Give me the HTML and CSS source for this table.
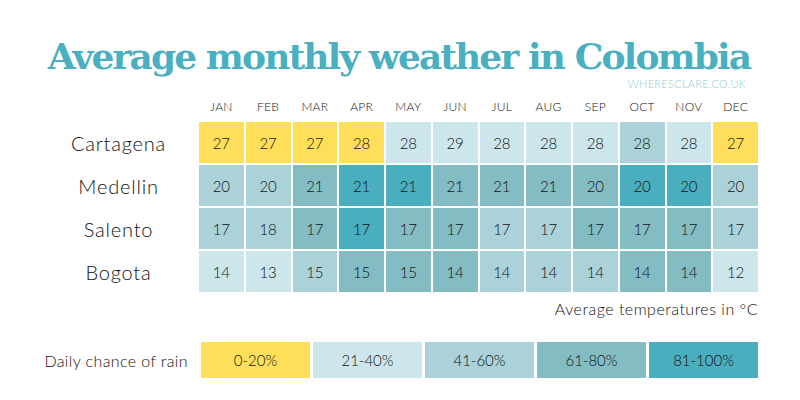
FILE: index.html
```html
<!DOCTYPE html>
<html lang="en">
<head>
<meta charset="utf-8">
<title>Average monthly weather in Colombia</title>
<link rel="stylesheet" href="styles.css">
</head>
<body>
<div class="page">
  <header class="head">
    <h1 class="title">Average monthly weather in Colombia</h1>
    <div class="site">WHERESCLARE.CO.UK</div>
  </header>

  <div class="chart">
    <div class="corner"></div>
    <div class="month">JAN</div><div class="month">FEB</div><div class="month">MAR</div><div class="month">APR</div><div class="month">MAY</div><div class="month">JUN</div><div class="month">JUL</div><div class="month">AUG</div><div class="month">SEP</div><div class="month">OCT</div><div class="month">NOV</div><div class="month">DEC</div>

    <div class="city">Cartagena</div>
    <div class="cell c0">27</div><div class="cell c0">27</div><div class="cell c0">27</div><div class="cell c0">28</div><div class="cell c1">28</div><div class="cell c1">29</div><div class="cell c1">28</div><div class="cell c1">28</div><div class="cell c1">28</div><div class="cell c2">28</div><div class="cell c1">28</div><div class="cell c0">27</div>

    <div class="city">Medellin</div>
    <div class="cell c2">20</div><div class="cell c2">20</div><div class="cell c3">21</div><div class="cell c4">21</div><div class="cell c4">21</div><div class="cell c3">21</div><div class="cell c3">21</div><div class="cell c3">21</div><div class="cell c3">20</div><div class="cell c4">20</div><div class="cell c4">20</div><div class="cell c2">20</div>

    <div class="city">Salento</div>
    <div class="cell c2">17</div><div class="cell c2">18</div><div class="cell c3">17</div><div class="cell c4">17</div><div class="cell c3">17</div><div class="cell c3">17</div><div class="cell c2">17</div><div class="cell c2">17</div><div class="cell c3">17</div><div class="cell c3">17</div><div class="cell c3">17</div><div class="cell c2">17</div>

    <div class="city">Bogota</div>
    <div class="cell c1">14</div><div class="cell c1">13</div><div class="cell c2">15</div><div class="cell c3">15</div><div class="cell c3">15</div><div class="cell c3">14</div><div class="cell c2">14</div><div class="cell c2">14</div><div class="cell c2">14</div><div class="cell c3">14</div><div class="cell c3">14</div><div class="cell c1">12</div>
  </div>

  <div class="note">Average temperatures in °C</div>

  <div class="legend">
    <div class="legend-label">Daily chance of rain</div>
    <div class="legend-items">
      <div class="key c0">0-20%</div>
      <div class="key c1">21-40%</div>
      <div class="key c2">41-60%</div>
      <div class="key c3">61-80%</div>
      <div class="key c4">81-100%</div>
    </div>
  </div>
</div>
</body>
</html>
```

FILE: styles.css
```css
* { box-sizing: border-box; }
html, body { margin: 0; padding: 0; background: #ffffff; }
body {
  width: 800px;
  height: 400px;
  overflow: hidden;
  font-family: "Lato", "Noto Sans", sans-serif;
  font-weight: 300;
  color: #111111;
}
.page {
  display: flex;
  flex-direction: column;
  padding: 0 42px 0 40px;
}
.head {
  display: flex;
  flex-direction: column;
  align-items: flex-end;
  padding-top: 38px;
}
.title {
  margin: 0;
  align-self: center;
  font-family: "DejaVu Serif", "Liberation Serif", serif;
  font-weight: 700;
  font-size: 36px;
  line-height: 36px;
  letter-spacing: -1.9px;
  color: #4aafc0;
  white-space: nowrap;
}
.site {
  margin-top: 4px;
  margin-right: 12px;
  font-size: 11px;
  line-height: 11px;
  letter-spacing: 0.3px;
  color: #8fcad5;
}
.chart {
  display: grid;
  grid-template-columns: 157px repeat(12, 44.75px);
  grid-template-rows: 28px repeat(4, 41px);
  column-gap: 2px;
  row-gap: 2px;
  margin-top: 3px;
}
.month {
  display: flex;
  align-items: center;
  justify-content: center;
  font-size: 12px;
  letter-spacing: 0.3px;
  color: #111;
}
.city {
  display: flex;
  align-items: center;
  justify-content: center;
  font-size: 20px;
  letter-spacing: 0.8px;
  color: #111;
}
.cell {
  display: flex;
  align-items: center;
  justify-content: center;
  font-size: 15px;
  color: #111;
}
.c0 { background: #ffde59; }
.c1 { background: #cde6eb; }
.c2 { background: #abd2d9; }
.c3 { background: #84bcc4; }
.c4 { background: #4aaebf; }
.note {
  align-self: flex-end;
  margin-top: 7px;
  font-size: 16px;
  line-height: 20px;
  letter-spacing: 0.5px;
  color: #111;
}
.legend {
  display: flex;
  align-items: center;
  margin-top: 23px;
}
.legend-label {
  width: 150px;
  font-size: 16px;
  letter-spacing: 0.4px;
  text-align: right;
  white-space: nowrap;
  padding-right: 1px;
}
.legend-items {
  display: flex;
  gap: 3px;
  margin-left: 12px;
}
.key {
  width: 109px;
  height: 36px;
  display: flex;
  align-items: center;
  justify-content: center;
  font-size: 15px;
  color: #111;
}
```
